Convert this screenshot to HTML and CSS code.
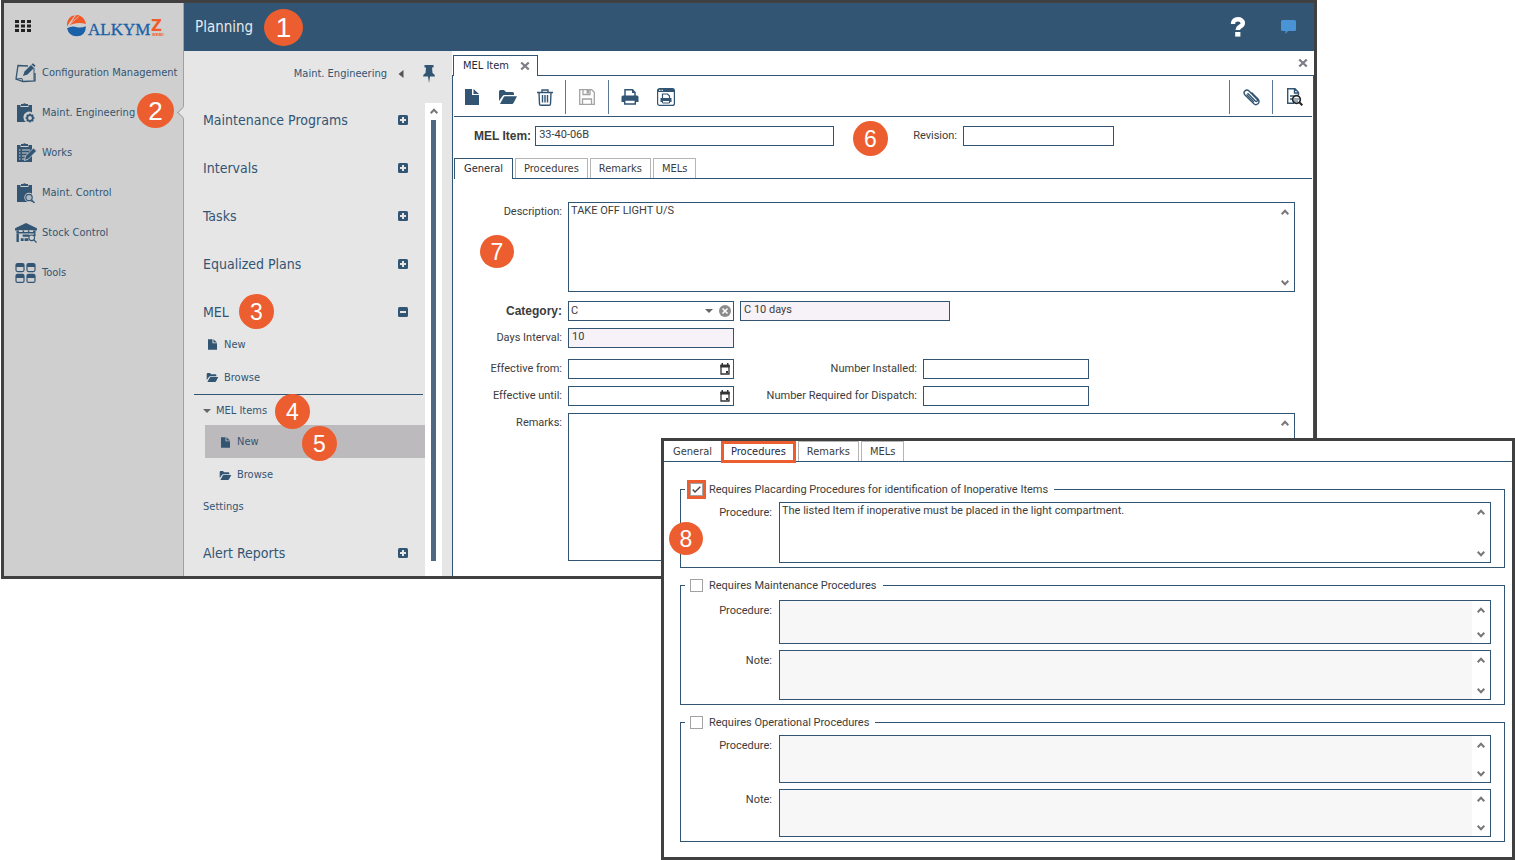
FILE: index.html
```
<!DOCTYPE html>
<html lang="en">
<head>
<meta charset="utf-8">
<title>Planning - MEL Item</title>
<link rel="stylesheet" href="styles.css">
</head>
<body>
<svg class="defs" aria-hidden="true">
  <symbol id="file" viewBox="0 0 14 16"><path d="M0 0h7v6h7v10H0z"/><path d="M8.500 0L14 5H8.500z"/></symbol>
  <symbol id="folder" viewBox="0 0 18 14"><path d="M0 11V1.500Q0 0 1.500 0H5l2 2h6.500Q15 2 15 3.500V5H5.500Q4 5 3.400 6.200z"/><path d="M1 14l3.600-6.800Q5 6.200 6 6.200h12L14.500 13Q14 14 13 14z"/></symbol>
  <symbol id="plus" viewBox="0 0 10 10"><rect width="10" height="10" rx="1.500"/><path d="M5 2v6M2 5h6" stroke="#e6e6e6" stroke-width="2"/></symbol>
  <symbol id="minus" viewBox="0 0 10 10"><rect width="10" height="10" rx="1.500"/><path d="M2 5h6" stroke="#e6e6e6" stroke-width="2"/></symbol>
  <symbol id="up" viewBox="0 0 8 6"><path d="M.7 5.200L4 1.800l3.300 3.400" fill="none" stroke="#777" stroke-width="2"/></symbol>
  <symbol id="down" viewBox="0 0 8 6"><path d="M.7.8L4 4.200 7.300.8" fill="none" stroke="#777" stroke-width="2"/></symbol>
  <symbol id="cross" viewBox="0 0 10 8"><path d="M1.200.5l7.600 7M8.800.5l-7.600 7" fill="none" stroke="#7d7d87" stroke-width="2.200"/></symbol>
  <symbol id="calendar" viewBox="0 0 10 12"><path d="M1 2.500h8V11H1z" fill="none" stroke="#333" stroke-width="1.300"/><path d="M.4 1.800h9.200V4.500H.4zM1.500 0h1.500v2H1.500zM7 0h1.500v2H7zM6 8h2v2H6z" fill="#333"/></symbol>
</svg>
<main class="stage">
  <section class="window app" aria-label="Planning">
    <aside class="sidebar">
      <div class="brand">
        <button class="plain" aria-label="Applications"><svg width="16" height="12" viewBox="0 0 16 12"><path fill="#222" d="M0 0h4v3H0zM6 0h4v3H6zM12 0h4v3h-4zM0 4.500h4v3H0zM6 4.500h4v3H6zM12 4.500h4v3h-4zM0 9h4v3H0zM6 9h4v3H6zM12 9h4v3h-4z"/></svg></button>
        <svg class="logo" width="102" height="24" viewBox="0 0 102 24" role="img" aria-label="ALKYM Z WEBII">
          <path d="M1 12.500C.5 6 4 1.800 9 1.200L3.200 9z" fill="#f15a29"/>
          <path d="M4 10.500L10 1.200q1.500-.3 2.800 0Q18.500 3 20 10C14 8.200 7.500 9 3 11.500z" fill="#f15a29"/>
          <path d="M3.600 10.700L12.500 2.500" stroke="#f3d9cf" stroke-width=".7"/>
          <path d="M1 14.200Q6 11.200 11 13.200q4 1 9-1Q19.500 22.200 10.500 22.200 3 22.200 1 14.200z" fill="#1a61a8"/>
          <text x="22" y="21" class="logo-name">ALKYM</text>
          <text class="logo-z"><tspan x="85" y="17">Z</tspan><tspan x="86" y="22" class="logo-sub">WEBII</tspan></text>
        </svg>
      </div>
      <nav class="modules" aria-label="Modules">
        <a href="#configuration"><svg width="22" height="20" viewBox="0 0 22 20"><path d="M13 3L3 2.500 1 16l7 2.500 12-.5V10" fill="none" stroke="#325573" stroke-width="1.300"/><path d="M1 16l6-.5L8 19M19 5v13" stroke="#325573" fill="none"/><path d="M8 13l1.500-4.500L16 2l3 3-6.500 6.500z"/><path d="M16.500 1.500l1.500-1.200 2.500 2.500L19.500 4z"/></svg>Configuration Management</a>
        <a href="#engineering" class="current"><svg width="22" height="20" viewBox="0 0 22 20"><path d="M2 2h3.500v2h8V2H17v7.500a5.500 5.500 0 0 0-6 9.500H2z"/><path d="M6 1h2q1.500-1.500 3 0h2v2H6z"/><circle cx="15" cy="15" r="2.800" fill="none" stroke="#325573" stroke-width="1.800"/><path d="M15 10.500V12M15 18v1.500M10.500 15H12M18 15h1.500M11.800 11.800l1.200 1.200M17 17l1.200 1.200M18.200 11.800L17 13M13 17l-1.200 1.200" stroke="#325573" stroke-width="1.500"/></svg>Maint. Engineering</a>
        <a href="#works"><svg width="22" height="20" viewBox="0 0 22 20"><path d="M2 2h3.500v2h8V2H17v17H2z"/><path d="M6 1h2q1.500-1.500 3 0h2v2H6z"/><path d="M4 7h1.500M7 7h8M4 10h1.500M7 10h6M4 13h1.500M7 13h4M4 16h1.500M7 16h3" stroke="#cfcfcf" stroke-width="1.100"/><path d="M9.500 17.500l1-4.500 8-8 3 3-8 8z" stroke="#cfcfcf" stroke-width=".8"/></svg>Works</a>
        <a href="#control"><svg width="22" height="20" viewBox="0 0 22 20"><path d="M2 2h3.500v2h8V2H17v17H2z"/><path d="M6 1h2q1.500-1.500 3 0h2v2H6z"/><circle cx="14" cy="14.500" r="3.200" stroke="#cfcfcf" stroke-width="3" fill="none"/><circle cx="14" cy="14.500" r="3.200" fill="#aebac4" stroke="#325573" stroke-width="1.200"/><path d="M16.500 17l3 3" stroke="#325573" stroke-width="1.500"/></svg>Maint. Control</a>
        <a href="#stock"><svg viewBox="0 0 23 21"><path d="M0 5.500L11.500 0 23 5.500V8H0z"/><path d="M1.500 8h20v3h-20z"/><path d="M4 7.500h4v2H4zM9.500 7.500h4v2h-4zM15 7.500h4v2h-4z" fill="#cfcfcf"/><path d="M1.500 11h2.500v9H1.500zM19.500 11h2v3h-2zM8 12h7v2.500H8zM6 16h3v3H6zM10 16h4v3h-4z"/><circle cx="17.500" cy="15.500" r="3" fill="#cfcfcf" stroke="#325573" stroke-width="1.100"/><path d="M19.500 17.500l3 3" stroke="#325573" stroke-width="1.300"/></svg>Stock Control</a>
        <a href="#tools"><svg width="22" height="20" viewBox="0 0 22 20"><g fill="none" stroke="#325573" stroke-width="1.200"><rect x="1" y=".6" width="8" height="8" rx="1.500"/><rect x="12" y=".6" width="8" height="8" rx="1.500"/><rect x="1" y="11.400" width="8" height="8" rx="1.500"/><rect x="12" y="11.400" width="8" height="8" rx="1.500"/></g><path d="M1 1h8v3H1zM12 1h8v3h-8zM1 12h8v3H1zM12 12h8v3h-8z"/></svg>Tools</a>
      </nav>
    </aside>
    <div class="workspace">
      <header class="topbar">
        <h1>Planning</h1>
        <button class="plain help" aria-label="Help"><svg width="16" height="20" viewBox="0 0 16 20"><path d="M3 7C3 3.500 5 2.300 7.800 2.300s5 1.300 5 3.900c0 3.500-5 3-5 6.800" fill="none" stroke="#fff" stroke-width="4.400"/><path d="M5.200 15h5.200v4.600H5.200z" fill="#fff"/></svg></button>
        <button class="plain" aria-label="Messages"><svg width="15" height="14" viewBox="0 0 15 14"><path d="M1.500 0h12Q15 0 15 1.500v8q0 1.500-1.500 1.500H7l-2.500 3V11h-3Q0 11 0 9.500v-8Q0 0 1.500 0z" fill="#4a94d6"/></svg></button>
      </header>
      <div class="body">
        <nav class="panel" aria-label="Maint. Engineering">
          <div class="panel-head"><span>Maint. Engineering</span>
            <button class="plain" aria-label="Collapse"><svg width="6" height="8" viewBox="0 0 6 8"><path d="M5.500 0v8L.5 4z" fill="#555"/></svg></button>
            <button class="plain" aria-label="Pin"><svg width="12" height="18" viewBox="0 0 12 18"><path d="M1.500 0h9v2.500H9l.5 5.500q2.500 1 2.500 3.500H7L6 18l-1-6.500H0Q0 9 2.500 8L3 2.500H1.500z"/></svg></button></div>
          <div class="panel-body">
            <div class="groups">
              <a class="group" href="#programs">Maintenance Programs<svg class="sign"><use href="#plus"/></svg></a>
              <a class="group" href="#intervals">Intervals<svg class="sign"><use href="#plus"/></svg></a>
              <a class="group" href="#tasks">Tasks<svg class="sign"><use href="#plus"/></svg></a>
              <a class="group" href="#plans">Equalized Plans<svg class="sign"><use href="#plus"/></svg></a>
              <div>
                <a class="group" href="#mel">MEL<svg class="sign"><use href="#minus"/></svg></a>
                <a class="entry" href="#new"><svg class="ico-file"><use href="#file"/></svg>New</a>
                <a class="entry" href="#browse"><svg class="ico-folder"><use href="#folder"/></svg>Browse</a>
                <hr>
                <a class="entry branch" href="#items"><svg width="8" height="4" viewBox="0 0 8 4"><path d="M0 0h8L4 4z" fill="#666"/></svg>MEL Items</a>
                <a class="entry sub selected" href="#item-new"><svg class="ico-file"><use href="#file"/></svg>New</a>
                <a class="entry sub" href="#item-browse"><svg class="ico-folder"><use href="#folder"/></svg>Browse</a>
                <a class="entry branch" href="#settings">Settings</a>
              </div>
              <a class="group" href="#alerts">Alert Reports<svg class="sign"><use href="#plus"/></svg></a>
            </div>
            <div class="track" aria-hidden="true"><svg class="chev"><use href="#up"/></svg><div class="thumb"></div></div>
          </div>
        </nav>
        <section class="content">
          <div class="doc-tabs">
            <div class="doc-tab">MEL Item<button class="plain" aria-label="Close tab"><svg class="x"><use href="#cross"/></svg></button></div>
            <button class="plain close-all" aria-label="Close"><svg class="x"><use href="#cross"/></svg></button>
          </div>
          <div class="doc">
            <div class="toolbar">
              <div class="tools first">
                <button class="plain" aria-label="New"><svg width="14" height="16"><use href="#file"/></svg></button>
                <button class="plain" aria-label="Open"><svg width="18" height="14"><use href="#folder"/></svg></button>
                <button class="plain" aria-label="Delete"><svg width="16" height="17" viewBox="0 0 16 17"><path fill="none" stroke="#325573" stroke-width="1.400" d="M0 3.500h16M5 3.500V1h6v2.500M2 3.500l.5 11.500q.1 1.200 1.300 1.200h8.400q1.200 0 1.300-1.200L14 3.500M5.500 6v7.500M8 6v7.500M10.500 6v7.500"/></svg></button>
              </div>
              <div class="tools ruled">
                <button class="plain" aria-label="Save" disabled><svg width="16" height="16" viewBox="0 0 16 16"><path fill="none" stroke="#a3a3a3" stroke-width="1.300" d="M.7.7h12l2.600 2.600v12H.7zM4 .7V5.500h7V.7M3.500 15.300V10h9v5.300"/><path d="M7.500 1h2.500v3.500H7.500z" fill="#a3a3a3"/></svg></button>
              </div>
              <div class="tools ruled print">
                <button class="plain" aria-label="Print"><svg width="18" height="16" viewBox="0 0 18 16"><path d="M4 7V.8h7.500L14 3.500V7" fill="none" stroke="#325573" stroke-width="1.500"/><path d="M11 .5V4h3z"/><path d="M2 6.500h14q1.500 0 1.500 1.500v5H.5V8Q.5 6.500 2 6.500z"/><path d="M3.700 11h10.600v4H3.700z" fill="#fff" stroke="#325573" stroke-width="1.500"/></svg></button>
                <button class="plain" aria-label="Print preview"><svg width="18" height="18" viewBox="0 0 18 18"><rect x=".6" y=".6" width="16.800" height="16.800" rx="2" fill="none" stroke="#325573" stroke-width="1.200"/><path d="M1 1h16v3H1z"/><path d="M2 2.300h1.500M4.500 2.300H6" stroke="#fff"/><path d="M5.500 10V6h5l2 2v2" fill="none" stroke="#325573" stroke-width="1.200"/><path d="M3.500 10h11v4h-11z"/><path d="M5.500 12.500h7V15h-7z" fill="#fff" stroke="#325573"/></svg></button>
              </div>
              <div class="tools ruled end">
                <button class="plain" aria-label="Attach"><svg width="17" height="17" viewBox="0 0 17 17"><path d="M4.500 4.200l7.800 7.800q1 .8 1.800 0t0-1.800L6 2.100Q4 .2 2 1.900T2 6l8.600 8.600q2.200 2 4.300.2t.3-4.600L8.500 3.500" fill="none" stroke="#325573" stroke-width="1.400"/><path d="M3.500 5.500l7.500 7.500" stroke="#325573" stroke-width="1.200"/></svg></button>
              </div>
              <div class="tools ruled last">
                <button class="plain" aria-label="Inspect"><svg width="16" height="18" viewBox="0 0 16 18"><path d="M11.500 7V4.500L8 .7H.7v14.600H7M7.500 1v4h4M3 8h4M3 11h3" fill="none" stroke="#325573" stroke-width="1.400"/><circle cx="9.500" cy="11.500" r="3.800" fill="#fff" stroke="#222" stroke-width="1.700"/><path d="M7 11h5M7 13h4" stroke="#325573"/><path d="M12 14l3.300 3.300" stroke="#222" stroke-width="2"/></svg></button>
              </div>
            </div>
            <div class="key-row">
              <label class="strong" for="mel">MEL Item:</label><input id="mel" class="box key" value="33-40-06B">
              <label class="rev" for="rev">Revision:</label><input id="rev" class="box short">
            </div>
            <div class="tabs" role="tablist">
              <button class="tab active" role="tab" aria-selected="true">General</button><button class="tab" role="tab">Procedures</button><button class="tab" role="tab">Remarks</button><button class="tab" role="tab">MELs</button>
            </div>
            <form class="fields">
              <div class="row"><label for="desc">Description:</label><div class="area tall"><textarea id="desc">TAKE OFF LIGHT U/S</textarea><div class="scroll"><svg class="chev"><use href="#up"/></svg><svg class="chev"><use href="#down"/></svg></div></div></div>
              <div class="row spaced"><label class="strong" for="cat">Category:</label><div class="box combo"><select id="cat"><option>C</option></select><svg width="8" height="4" viewBox="0 0 8 4"><path d="M0 0h8L4 4z" fill="#666"/></svg><button type="button" class="plain" aria-label="Clear"><svg width="12" height="12" viewBox="0 0 12 12"><circle cx="6" cy="6" r="6" fill="#8c8c8c"/><path d="M3.500 3.500l5 5M8.500 3.500l-5 5" stroke="#fff" stroke-width="1.500"/></svg></button></div><input class="box wide locked" aria-label="Category description" value="C 10 days" readonly></div>
              <div class="row"><label for="days">Days Interval:</label><input id="days" class="box locked" value="10" readonly></div>
              <div class="row apart"><label for="from">Effective from:</label><div class="box combo"><input id="from"><button type="button" class="plain" aria-label="Pick date"><svg width="12" height="12"><use href="#calendar"/></svg></button></div><label class="second" for="inst">Number Installed:</label><input id="inst" class="box"></div>
              <div class="row"><label for="until">Effective until:</label><div class="box combo"><input id="until"><button type="button" class="plain" aria-label="Pick date"><svg width="12" height="12"><use href="#calendar"/></svg></button></div><label class="second" for="disp">Number Required for Dispatch:</label><input id="disp" class="box"></div>
              <div class="row"><label for="rem">Remarks:</label><div class="area taller"><textarea id="rem"></textarea><div class="scroll"><svg class="chev"><use href="#up"/></svg><svg class="chev"><use href="#down"/></svg></div></div></div>
            </form>
          </div>
        </section>
      </div>
    </div>
  </section>

  <section class="window procedures" aria-label="Procedures">
    <div class="tabs" role="tablist">
      <button class="tab" role="tab">General</button><button class="tab marked" role="tab" aria-selected="true">Procedures</button><button class="tab" role="tab">Remarks</button><button class="tab" role="tab">MELs</button>
    </div>
    <form class="sets">
      <fieldset>
        <legend><span class="check marked"><input type="checkbox" id="placard" checked></span><label for="placard">Requires Placarding Procedures for identification of Inoperative Items</label></legend>
        <div class="row"><label for="p1">Procedure:</label><div class="area a61"><textarea id="p1">The listed Item if inoperative must be placed in the light compartment.</textarea><div class="scroll"><svg class="chev"><use href="#up"/></svg><svg class="chev"><use href="#down"/></svg></div></div></div>
      </fieldset>
      <fieldset class="two">
        <legend><span class="check"><input type="checkbox" id="maint"></span><label for="maint">Requires Maintenance Procedures</label></legend>
        <div class="row"><label for="p2">Procedure:</label><div class="area a44"><textarea id="p2" disabled></textarea><div class="scroll"><svg class="chev"><use href="#up"/></svg><svg class="chev"><use href="#down"/></svg></div></div></div>
        <div class="row"><label for="n2">Note:</label><div class="area a50"><textarea id="n2" disabled></textarea><div class="scroll"><svg class="chev"><use href="#up"/></svg><svg class="chev"><use href="#down"/></svg></div></div></div>
      </fieldset>
      <fieldset>
        <legend><span class="check"><input type="checkbox" id="oper"></span><label for="oper">Requires Operational Procedures</label></legend>
        <div class="row"><label for="p3">Procedure:</label><div class="area a48"><textarea id="p3" disabled></textarea><div class="scroll"><svg class="chev"><use href="#up"/></svg><svg class="chev"><use href="#down"/></svg></div></div></div>
        <div class="row"><label for="n3">Note:</label><div class="area a48"><textarea id="n3" disabled></textarea><div class="scroll"><svg class="chev"><use href="#up"/></svg><svg class="chev"><use href="#down"/></svg></div></div></div>
      </fieldset>
    </form>
  </section>

  <span class="pin pin1">1</span><span class="pin pin2">2</span><span class="pin pin3">3</span><span class="pin pin4">4</span><span class="pin pin5">5</span><span class="pin pin6">6</span><span class="pin pin7">7</span><span class="pin pin8">8</span>
</main>
</body>
</html>
```
FILE: styles.css
```
:root {
  --navy: #325573;
  --ink: #3c3c3c;
  --orange: #ec5e2f;
  --ui: "DejaVu Sans Condensed", "DejaVu Sans", sans-serif;
  --form: Roboto, "Liberation Sans", sans-serif;
}
* { box-sizing: border-box; }
body { margin: 0; background: #fff; font: 11px/14px var(--ui); color: var(--ink); }
a { color: var(--navy); text-decoration: none; }
svg { display: block; flex: none; fill: var(--navy); }
.defs { position: absolute; width: 0; height: 0; }
button, input, select, textarea { font: inherit; color: inherit; margin: 0; }
.plain { display: flex; padding: 0; border: 0; background: none; cursor: pointer; }

.stage { position: relative; display: grid; }
.window { grid-area: 1 / 1; border: 3px solid #404040; background: #fff; }
.app { display: flex; align-self: start; margin: 0 198px 0 1px; }
.procedures { margin: 438px 0 0 661px; }

/* module sidebar */
.sidebar { width: 180px; flex: none; background: #cfcfcf; border-right: 1px solid #a0a0a0; }
.brand { display: flex; align-items: flex-start; gap: 35px; height: 49px; padding: 11px 0 0 11px; }
.brand .plain { padding-top: 6px; }
.logo-name { font: 17px "Liberation Serif", serif; fill: #1a61a8; stroke: #1a61a8; stroke-width: .3px; }
.logo-z { font: bold 15px "DejaVu Sans", sans-serif; fill: #f15a29; }
.logo-sub { font: bold 4px "Liberation Sans", sans-serif; fill: #f15a29; }
.modules a { position: relative; display: flex; align-items: center; height: 40px; padding: 1px 0 0 11px; gap: 5px; }
.modules a svg { width: 22px; height: 20px; }
.modules .current::after {
  content: ""; position: absolute; right: -5px; top: 16px; width: 8px; height: 8px;
  background: #e6e6e6; border: solid #a0a0a0; border-width: 0 0 1px 1px; transform: rotate(45deg);
}

.workspace { flex: 1; min-width: 0; display: flex; flex-direction: column; }
.topbar { display: flex; align-items: center; height: 48px; padding: 0 18px 0 11px; background: var(--navy); }
.topbar h1 { flex: 1; margin: 0; font: 15px/20px var(--ui); color: #e4e9ee; }
.help { margin-right: 35px; }
.body { flex: 1; display: flex; }

/* navigation panel */
.panel { width: 268px; flex: none; display: flex; flex-direction: column; background: #e6e6e6; }
.panel-head { display: flex; justify-content: flex-end; align-items: center; gap: 11px; height: 45px; padding-right: 17px; color: var(--navy); }
.panel-head .plain + .plain { margin-left: 8px; }
.panel-body { flex: 1; display: flex; }
.groups { flex: 1; display: flex; flex-direction: column; gap: 16px; padding: 8px 0 6px; }
.group { display: flex; align-items: center; justify-content: space-between; height: 32px; padding: 0 17px 0 19px; font-size: 14px; line-height: 20px; }
.sign { width: 10px; height: 10px; }
.entry { display: flex; align-items: center; height: 33px; padding-left: 22px; gap: 5px; }
.ico-file { width: 9px; height: 11px; margin: 0 2px; }
.ico-folder { width: 13px; height: 9px; }
.branch { height: 30px; padding: 2px 0 0 19px; }
.sub { margin-left: 21px; padding: 1px 0 0 14px; }
.selected { background: #bdbabd; }
.panel hr { height: 1px; margin: 0 2px 0 10px; border: 0; background: var(--navy); }
.track { width: 17px; margin: 7px 10px 0 0; padding: 5px 0 15px; display: flex; flex-direction: column; align-items: center; gap: 6px; background: #fff; }
.thumb { flex: 1; width: 5px; background: #4d687f; }
.chev { width: 8px; height: 6px; }

/* document area */
.content { flex: 1; min-width: 0; display: flex; flex-direction: column; padding-top: 4px; }
.doc-tabs { display: flex; align-items: flex-start; justify-content: space-between; padding: 0 6px 0 1px; }
.doc-tab { display: flex; align-items: center; gap: 11px; height: 21px; margin-bottom: -1px; padding: 0 7px 1px 9px; border: 1px solid var(--navy); border-bottom: 0; background: #fff; z-index: 1; color: #1e2a3c; }
.x { width: 10px; height: 8px; }
.close-all { padding-top: 4px; }
.doc { flex: 1; border: 1px solid var(--navy); border-bottom: 0; padding: 0 1px; }
.toolbar { display: flex; height: 41px; padding: 4px 0 2px; border-bottom: 1px solid var(--navy); }
.tools { display: flex; align-items: center; }
.first { gap: 20px; padding: 0 12px 0 11px; }
.ruled { border-left: 1px solid #5c7892; padding: 0 13px; }
.print { gap: 18px; padding-left: 12px; }
.end { margin-left: auto; padding-right: 12px; }
.last { padding: 0 9px 0 14px; }

.box { width: 166px; height: 20px; padding: 0 3px 3px; border: 1px solid var(--navy); border-radius: 0; background: #fff; font-family: var(--form); outline: 0; }
label { font-family: var(--form); }
.strong { font: bold 12px/14px "Liberation Sans", sans-serif; }
.key-row { display: flex; align-items: center; gap: 4px; padding: 9px 0 12px 20px; }
.key { width: 299px; }
.rev { margin-left: 75px; margin-right: 2px; }
.short { width: 151px; }

.tabs { display: flex; align-items: flex-end; gap: 2px; height: 21px; border-bottom: 1px solid var(--navy); }
.tab { height: 20px; padding: 0 8px; border: 1px solid #b5b5b5; border-bottom: 0; background: #fff; }
.active { height: 21px; margin-bottom: -1px; padding: 0 9px; border-color: var(--navy); color: #1e2a3c; }

.fields { display: flex; flex-direction: column; gap: 7px; padding: 23px 17px 15px 0; }
.row { display: flex; gap: 6px; }
.row label { width: 108px; flex: none; padding-top: 3px; text-align: right; }
.row .second { width: 177px; }
.spaced { margin-top: 2px; }
.apart { margin-top: 4px; }
.combo { display: flex; align-items: center; gap: 6px; padding: 0 2px 0 0; }
.combo input, .combo select { flex: 1; min-width: 0; height: 18px; padding: 0 2px; border: 0; background: none; appearance: none; outline: 0; }
.wide { width: 210px; }
.locked { background: #f7f2f7; }
.area { flex: 1; display: flex; border: 1px solid var(--navy); }
.area textarea { flex: 1; min-width: 0; padding: 1px 2px; border: 0; resize: none; background: #fff; font-family: var(--form); overflow: hidden; outline: 0; }
.area textarea:disabled { background: #f7f7f7; }
.scroll { width: 18px; display: flex; flex-direction: column; align-items: center; justify-content: space-between; padding: 6px 0 5px; }
.tall { height: 90px; }
.taller { height: 148px; }

/* procedures window */
.procedures .tab { height: 20px; }
.procedures .tab:first-child { border-color: transparent; }
.procedures .tab.marked { height: 22px; margin: 0 0 -2px -2px; padding: 0 7px; border: 3px solid var(--orange); color: #1e2a3c; }
.sets { display: flex; flex-direction: column; gap: 8px; padding: 18px 7px 15px 16px; }
fieldset { min-width: 0; margin: 0; padding: 3px 13px 4px 4px; border: 1px solid var(--navy); }
.two { padding-top: 5px; }
legend { display: flex; align-items: center; height: 19px; padding-right: 6px; }
legend .check { margin: 0 2px 0 3px; }
.check { background: #fff; }
.check input { display: block; appearance: none; width: 13px; height: 13px; border: 1px solid #a3a3a3; background: #fff; }
.check input:checked { background: no-repeat center / 9px 7px url("data:image/svg+xml,%3Csvg xmlns='http://www.w3.org/2000/svg' viewBox='0 0 9 7'%3E%3Cpath d='M.7 3.500l2.300 2.500L8.300.8' fill='none' stroke='%23444' stroke-width='1.400'/%3E%3C/svg%3E"); }
legend .marked { margin: 0 -1px 0 0; border: 3px solid var(--orange); }
legend label { padding-left: 4px; }
fieldset .row { gap: 7px; margin-bottom: 6px; }
fieldset .row:last-child { margin-bottom: 0; }
fieldset .row label { width: 87px; padding-top: 4px; }
.a44 { height: 44px; }
.a48 { height: 48px; }
.a50 { height: 50px; }
.a61 { height: 61px; }

/* numbered callouts over the windows */
.pin { position: absolute; display: flex; align-items: center; justify-content: center; width: 35px; height: 35px; border-radius: 50%; background: var(--orange); color: #fff; font: 23px/28px "Liberation Sans", sans-serif; }
.pin1 { left: 264px; top: 9px; width: 39px; height: 37px; font-size: 28px; }
.pin2 { left: 137px; top: 93px; width: 37px; height: 35px; font-size: 26px; }
.pin3 { left: 239px; top: 294px; }
.pin4 { left: 275px; top: 394px; }
.pin5 { left: 302px; top: 426px; }
.pin6 { left: 853px; top: 121px; }
.pin7 { left: 480px; top: 235px; width: 34px; height: 33px; }
.pin8 { left: 669px; top: 522px; width: 34px; height: 33px; }
```
